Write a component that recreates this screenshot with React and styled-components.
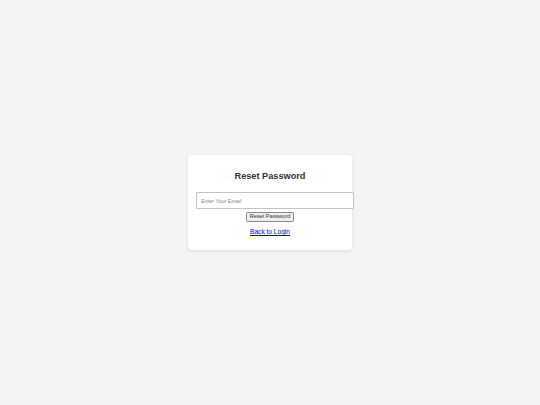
import React from "react";
import styled, { createGlobalStyle } from "styled-components";

const Global = createGlobalStyle`
  html, body { margin: 0; padding: 0; height: 100%; }
  body {
    background: #f4f4f4;
    font-family: "Liberation Sans", Arial, sans-serif;
  }
  #root { height: 100%; }
`;

const Page = styled.div`
  height: 100vh;
  display: flex;
  align-items: center;
  justify-content: center;
`;

const Card = styled.div`
  width: 148px;
  padding: 8.4px;
  background: #ffffff;
  border-radius: 4px;
  box-shadow: 0 1px 4px rgba(0, 0, 0, 0.1);
  text-align: center;
  font-size: 6.6px;
`;

const Title = styled.h2`
  margin: 7.7px 0 11px;
  font-size: 9.2px;
  font-weight: bold;
  color: #333333;
  line-height: normal;
`;

const EmailInput = styled.input`
  display: block;
  width: 100%;
  height: 15px;
  padding: 0 4.2px;
  margin: 0;
  border: 1px solid #c4c4c4;
  border-radius: 1px;
  font-family: "Liberation Sans", Arial, sans-serif;
  font-size: 5.4px;
  color: #333;
  background: #fff;
  outline: none;
  &::placeholder { color: #8a8a8a; }
`;

const Button = styled.button`
  display: block;
  margin: 3px auto 0;
  height: 9.5px;
  padding: 0 2.6px;
  font-family: "Liberation Sans", Arial, sans-serif;
  font-size: 5.6px;
  line-height: 1;
  color: #333;
  background: #efefef;
  border: 0.6px solid #8a8a8a;
  border-radius: 1.2px;
`;

const LinkLine = styled.p`
  margin: 6.2px 0 6.6px;
  font-size: 6.6px;
  line-height: normal;
`;

const Link = styled.a`
  color: #0000ee;
  text-decoration: underline;
`;

export default function App() {
  return (
    <>
      <Global />
      <Page>
        <Card>
          <Title>Reset Password</Title>
          <EmailInput type="email" placeholder="Enter Your Email" />
          <Button type="button">Reset Password</Button>
          <LinkLine>
            <Link href="#">Back to Login</Link>
          </LinkLine>
        </Card>
      </Page>
    </>
  );
}
